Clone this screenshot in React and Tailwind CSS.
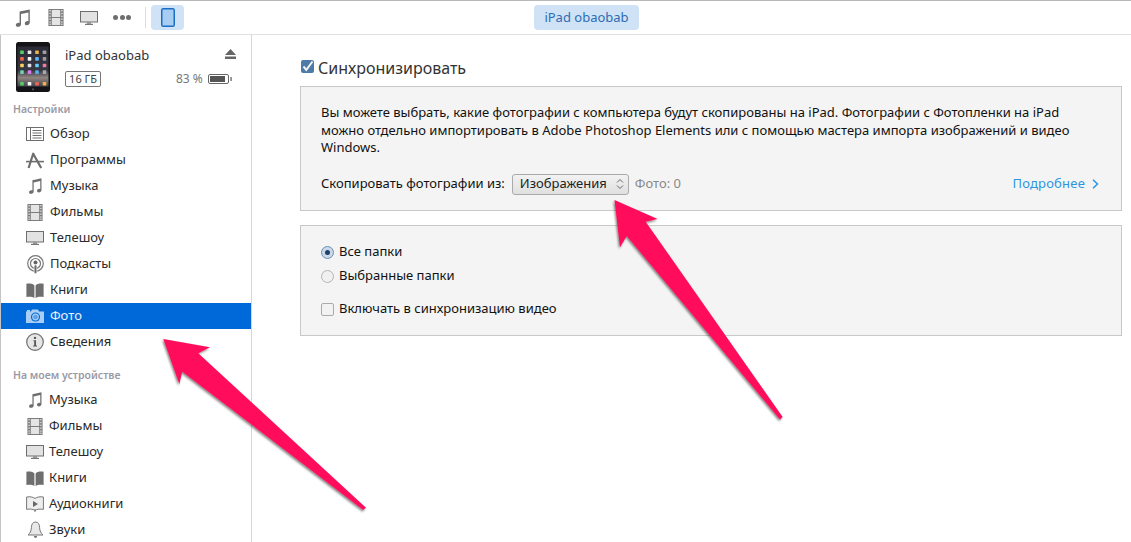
import React from "react";

const G = "#6e6e6e";
const Music = ({ w = 14, h = 16 }) => (
  <svg width={w} height={h} viewBox="0 0 15 18">
    <path fill={G} d="M4.6 2.6 L14.8 0.4 V13.6 C14.8 15.2 13.3 16.2 11.8 16.2 C10.5 16.2 9.8 15.4 9.8 14.4 C9.8 13.1 11 12.1 12.4 12.1 C12.8 12.1 13.2 12.2 13.4 12.3 V3.4 L6 5 V15.2 C6 16.8 4.5 17.8 2.9 17.8 C1.6 17.8 0.8 17 0.8 16 C0.8 14.7 2 13.7 3.4 13.7 C3.8 13.7 4.3 13.8 4.6 13.9 Z" />
  </svg>
);
const Film = ({ w = 16, h = 17 }) => (
  <svg width={w} height={h} viewBox="0 0 16 18">
    <rect x="0" y="0" width="16" height="18" fill="#777" />
    <rect x="3.5" y="1" width="9" height="7.5" fill="#e4e4e4" />
    <rect x="3.5" y="9.5" width="9" height="7.5" fill="#e4e4e4" />
    {[1, 4, 7, 10, 13, 15.4].map((y) => (
      <g key={y}>
        <rect x="1" y={y} width="1.5" height="1.6" fill="#ddd" />
        <rect x="13.5" y={y} width="1.5" height="1.6" fill="#ddd" />
      </g>
    ))}
  </svg>
);
const Monitor = ({ w = 18, h = 14 }) => (
  <svg width={w} height={h} viewBox="0 0 18 14">
    <rect x="0.5" y="0.5" width="17" height="10.5" fill="#e2e2e2" stroke="#6e6e6e" />
    <rect x="7" y="11.5" width="4" height="1.2" fill="#777" />
    <rect x="5" y="12.8" width="8" height="1.2" fill="#777" />
  </svg>
);
const Overview = () => (
  <svg width="18" height="14" viewBox="0 0 18 14" fill="none" stroke="#6e6e6e">
    <rect x="0.5" y="0.5" width="17" height="13" />
    <path d="M4.5 0.5V13.5M6.5 3.5H15.5M6.5 6H15.5M6.5 8.5H15.5M6.5 11H15.5" />
  </svg>
);
const Apps = () => (
  <svg width="18" height="17" viewBox="0 0 18 17" fill="none" stroke="#6e6e6e">
    <path strokeWidth="2.2" d="M7.4 1 L2.6 16 M6.8 1 L15.2 16" />
    <path strokeWidth="1.6" d="M0 9.6 H18" />
  </svg>
);
const Podcast = () => (
  <svg width="17" height="19" viewBox="0 0 17 19" fill="none" stroke="#777">
    <circle cx="8.5" cy="8.5" r="7.8" strokeWidth="1.2" />
    <circle cx="8.5" cy="8.5" r="5" strokeWidth="1.2" />
    <circle cx="8.5" cy="7.5" r="2" fill="#666" stroke="none" />
    <rect x="7.2" y="10" width="2.6" height="8.5" rx="1.2" fill="#666" stroke="#fff" strokeWidth="0.6" />
  </svg>
);
const Book = () => (
  <svg width="18" height="15" viewBox="0 0 18 15">
    <path fill="#6e6e6e" d="M8.4 2.4 C7 0.8 3.6 0.2 0.4 0.8 V14 C3.4 13.4 6.6 13.6 8.4 15 Z M9.6 2.4 C11 0.8 14.4 0.2 17.6 0.8 V14 C14.6 13.4 11.4 13.6 9.6 15 Z" />
  </svg>
);
const Camera = () => (
  <svg width="18" height="14" viewBox="0 0 18 14">
    <path fill="#a9cdf3" d="M0 2.5 H1 V1 H4 V2.5 H5 L6 0.5 H12 L13 2.5 H18 V14 H0 Z" />
    <circle cx="9.5" cy="8" r="4.6" fill="#0069d9" />
    <circle cx="9.5" cy="8" r="3.4" fill="#a9cdf3" />
    <circle cx="9.5" cy="8" r="2.3" fill="#5d9fe6" />
  </svg>
);
const Info = () => (
  <svg width="18" height="18" viewBox="0 0 18 18">
    <circle cx="9" cy="9" r="8.3" fill="#e6e6e6" stroke="#6e6e6e" strokeWidth="1.2" />
    <circle cx="9" cy="4.9" r="1.2" fill="#555" />
    <path d="M7.5 7.3 H10 V12.6 H11 V13.6 H7.2 V12.6 H8.2 V8.3 H7.5 Z" fill="#555" />
  </svg>
);
const AudioBook = () => (
  <svg width="18" height="16" viewBox="0 0 18 16">
    <path fill="#eee" stroke="#777" d="M9 2.5 C7.4 1 3.6 0.4 0.6 1 V13.4 C3.6 12.8 7 13 9 14.4 C11 13 14.4 12.8 17.4 13.4 V1 C14.4 0.4 10.6 1 9 2.5 Z" />
    <path fill="#666" d="M7 5 L12 8 L7 11 Z" />
    <rect x="8.5" y="13" width="1" height="3" fill="#777" />
  </svg>
);
const Bell = () => (
  <svg width="17" height="18" viewBox="0 0 17 18">
    <path fill="#e8e8e8" stroke="#777" d="M8.5 1 C11.5 1 12.5 3.5 12.6 6.5 C12.7 10 14 12.4 16 14 H1 C3 12.4 4.3 10 4.4 6.5 C4.5 3.5 5.5 1 8.5 1 Z" />
    <path fill="#777" d="M6.8 15 H10.2 C10 17.6 7 17.6 6.8 15 Z" />
  </svg>
);

const IPadPhoto = () => {
  const colors = ["#4fd163", "#e6e6e6", "#f0b04a", "#a0a0a0", "#f0654f", "#f5f5f5", "#62b5f2", "#9a9a9a", "#f5d35a", "#e0e0e0", "#66d0ff", "#f27a9a", "#70d0b0", "#d77be6", "#58aff0", "#a8a8a8"];
  return (
    <svg width="34" height="50" viewBox="0 0 34 50">
      <defs>
        <linearGradient id="wall" x1="0" y1="0" x2="0" y2="1">
          <stop offset="0" stopColor="#2b2b36" />
          <stop offset="0.6" stopColor="#363642" />
          <stop offset="0.78" stopColor="#8f8480" />
          <stop offset="1" stopColor="#45424c" />
        </linearGradient>
      </defs>
      <rect width="34" height="50" rx="2.5" fill="#141416" />
      <rect x="1.5" y="4.5" width="31" height="40" fill="url(#wall)" />
      {colors.map((c, i) => (
        <rect key={i} x={4.2 + (i % 4) * 7.5} y={8.5 + Math.floor(i / 4) * 6.6} width="3.6" height="3.6" rx="0.7" fill={c} />
      ))}
      {["#4fd163", "#f5f5f5", "#f0654f", "#f0b04a"].map((c, i) => (
        <rect key={c} x={4.2 + i * 7.5} y="40" width="3.6" height="3.6" rx="0.7" fill={c} />
      ))}
      <circle cx="17" cy="47.3" r="1.1" fill="#555" />
    </svg>
  );
};

const Row = ({ icon, label, active, tight }) => (
  <div className={`flex h-[26px] items-center ${active ? "bg-[#0069d9] text-[#e8f1fc]" : "text-[#2a2a2a]"}`}>
    <div className="ml-[24px] flex w-[20px] items-center justify-center">{icon}</div>
    <span className={tight ? "ml-[4px]" : "ml-[5px]"}>{label}</span>
  </div>
);

const Heading = ({ children, className }) => (
  <div className={`pl-[12px] text-[10.5px] font-semibold text-[#9a9aa6] ${className}`}>{children}</div>
);

export default function App() {
  return (
    <div
      className="relative flex h-[542px] w-[1131px] flex-col overflow-hidden bg-white text-[13px] text-[#222]"
      style={{ fontFamily: '"Noto Sans", sans-serif' }}
    >
      <header className="relative flex h-[35px] shrink-0 items-center border-t border-b border-t-[#b8b8b8] border-b-[#e0e0e0] bg-white">
        <div className="ml-[15px] w-[33px]"><Music w={15} h={18} /></div>
        <div className="w-[32px]"><Film w={16} h={17} /></div>
        <div className="w-[33px]"><Monitor /></div>
        <div className="flex w-[32px] gap-[1.5px]">
          <span className="h-[5px] w-[5px] rounded-full bg-[#6e6e6e]" />
          <span className="h-[5px] w-[5px] rounded-full bg-[#6e6e6e]" />
          <span className="h-[5px] w-[5px] rounded-full bg-[#6e6e6e]" />
        </div>
        <div className="h-[21px] w-px bg-[#dcdcdc]" />
        <div className="ml-[5px] flex h-[25px] w-[33px] items-center justify-center rounded-[4px] bg-[#cfe2f6]">
          <svg width="14" height="19" viewBox="0 0 14 19">
            <rect x="0.75" y="0.75" width="12.5" height="17.5" rx="1.6" fill="#a8cdf2" stroke="#1a6fc4" strokeWidth="1.5" />
          </svg>
        </div>
        <div className="absolute left-[534px] top-[4px] flex h-[25px] w-[105px] items-center justify-center rounded-[4px] bg-[#cfe2f6] text-[13px] text-[#2d6db5]">
          iPad obaobab
        </div>
      </header>

      <div className="flex min-h-0 flex-1">
        <aside className="w-[252px] shrink-0 overflow-hidden border-x border-l-[#c4c4c4] border-r-[#d6d6d6]">
          <div className="relative h-[66px]">
            <div className="absolute left-[15px] top-[7px]"><IPadPhoto /></div>
            <div className="absolute left-[64px] top-[11px] text-[13px] leading-[18px] text-[#333]">iPad obaobab</div>
            <div className="absolute left-[64px] top-[36px] flex h-[16px] w-[36px] items-center justify-center rounded-[2px] border border-[#777] text-[11px] text-[#444]">16 ГБ</div>
            <svg className="absolute left-[224px] top-[14px]" width="11" height="10" viewBox="0 0 11 10">
              <path d="M5.5 0 L11 6 H0 Z M0 7.6 H11 V10 H0 Z" fill="#666" />
            </svg>
            <div className="absolute left-[175px] top-[36px] text-[12px] leading-[16px] text-[#777]">83 %</div>
            <svg className="absolute left-[207px] top-[39px]" width="24" height="10" viewBox="0 0 24 10">
              <rect x="0.5" y="0.5" width="20" height="9" rx="1.5" fill="#fff" stroke="#666" />
              <rect x="2" y="2" width="15" height="6" fill="#555" />
              <rect x="22.4" y="3" width="1.3" height="4" fill="#666" />
            </svg>
          </div>
          <Heading className="h-[20px] leading-[16px]">Настройки</Heading>
          <Row icon={<Overview />} label="Обзор" />
          <Row icon={<Apps />} label="Программы" />
          <Row icon={<Music />} label="Музыка" />
          <Row icon={<Film />} label="Фильмы" />
          <Row icon={<Monitor />} label="Телешоу" />
          <Row icon={<Podcast />} label="Подкасты" />
          <Row icon={<Book />} label="Книги" />
          <Row icon={<Camera />} label="Фото" active />
          <Row icon={<Info />} label="Сведения" />
          <Heading className="mt-[12px] h-[20px] leading-[16px]">На моем устройстве</Heading>
          <Row icon={<Music />} label="Музыка" tight />
          <Row icon={<Film />} label="Фильмы" tight />
          <Row icon={<Monitor />} label="Телешоу" tight />
          <Row icon={<Book />} label="Книги" tight />
          <Row icon={<AudioBook />} label="Аудиокниги" tight />
          <Row icon={<Bell />} label="Звуки" tight />
        </aside>

        <main className="min-w-0 flex-1 pl-[48px] pr-[9px] pt-[24px]">
          <label className="flex h-[18px] items-start">
            <span className="ml-[1px] mt-[1px] h-[13px] w-[13px] rounded-[2px] bg-[#4d7aa6]">
              <svg width="13" height="13" viewBox="0 0 13 13" className="overflow-visible">
                <path d="M2.5 6.5 L5.3 9.8 L11.5 1.5" fill="none" stroke="#f2f2f2" strokeWidth="2" />
              </svg>
            </span>
            <span className="ml-[4px] text-[16px] leading-[18px] text-[#333]">Синхронизировать</span>
          </label>

          <section className="mt-[9px] h-[125px] border border-[#c8c8c8] bg-[#f4f4f4] pl-[20px] pr-[22px] pt-[17px]">
            <p className="text-[13px] leading-[17.5px] text-[#111]">
              Вы можете выбрать, какие фотографии с компьютера будут скопированы на iPad. Фотографии с Фотопленки на iPad
              <br />
              можно отдельно импортировать в Adobe Photoshop Elements или с помощью мастера импорта изображений и видео
              <br />
              Windows.
            </p>
            <div className="mt-[17px] flex items-center">
              <span className="text-[13px] text-[#111]">Скопировать фотографии из:</span>
              <div className="ml-[7px] flex h-[21px] w-[117px] items-center justify-between rounded-[3px] border border-[#aaa] bg-gradient-to-b from-[#f2f2f2] to-[#e0e0e0] pl-[7px] pr-[4px] text-[13px] text-[#222]">
                <span>Изображения</span>
                <svg width="8" height="12" viewBox="0 0 8 12" fill="none" stroke="#666">
                  <path d="M1 4.5 L4 1.5 L7 4.5 M1 7.5 L4 10.5 L7 7.5" />
                </svg>
              </div>
              <span className="ml-[6px] text-[13px] text-[#888]">Фото: 0</span>
              <a className="ml-auto flex items-center text-[13px] tracking-[0.2px] text-[#2b96e0]">
                Подробнее
                <svg className="ml-[7px]" width="7" height="10" viewBox="0 0 7 10" fill="none" stroke="#2b96e0" strokeWidth="1.5">
                  <path d="M1 0.8 L5.5 5 L1 9.2" />
                </svg>
              </a>
            </div>
          </section>

          <section className="mt-[14px] h-[111px] border border-[#c8c8c8] bg-[#f4f4f4] pl-[20px] pt-[16px] text-[13px] text-[#111]">
            <div className="flex h-[20px] items-center">
              <span className="flex h-[13px] w-[13px] items-center justify-center rounded-full border border-[#6d8fb3] bg-[#c9d9ea]">
                <span className="h-[5px] w-[5px] rounded-full bg-[#1f3f66]" />
              </span>
              <span className="ml-[5px]">Все папки</span>
            </div>
            <div className="mt-[4px] flex h-[20px] items-center">
              <span className="h-[13px] w-[13px] rounded-full border border-[#b5b5b5] bg-[#f0f0f0]" />
              <span className="ml-[5px]">Выбранные папки</span>
            </div>
            <div className="mt-[13px] flex h-[20px] items-center">
              <span className="h-[13px] w-[13px] rounded-[2px] border border-[#aaa] bg-[#f2f2f2]" />
              <span className="ml-[5px]">Включать в синхронизацию видео</span>
            </div>
          </section>
        </main>
      </div>

      <svg className="pointer-events-none absolute inset-0" width="1131" height="542" viewBox="0 0 1131 542">
        <defs>
          <filter id="sh" x="-10%" y="-10%" width="120%" height="120%">
            <feDropShadow dx="-1" dy="1.5" stdDeviation="1" floodColor="#000" floodOpacity="0.5" />
          </filter>
        </defs>
        <path filter="url(#sh)" fill="#ff0f5b" d="M614.5 200 L657.7 219 L645.7 221.7 L782.7 417 L780 419.5 L626.7 236 L620 247.3 Z" />
        <path filter="url(#sh)" fill="#ff0f5b" d="M163.3 339 L210 347.3 L198.3 353.3 L366 507.7 L363.3 510 L182.3 371.7 L179.3 384 Z" />
      </svg>
    </div>
  );
}
